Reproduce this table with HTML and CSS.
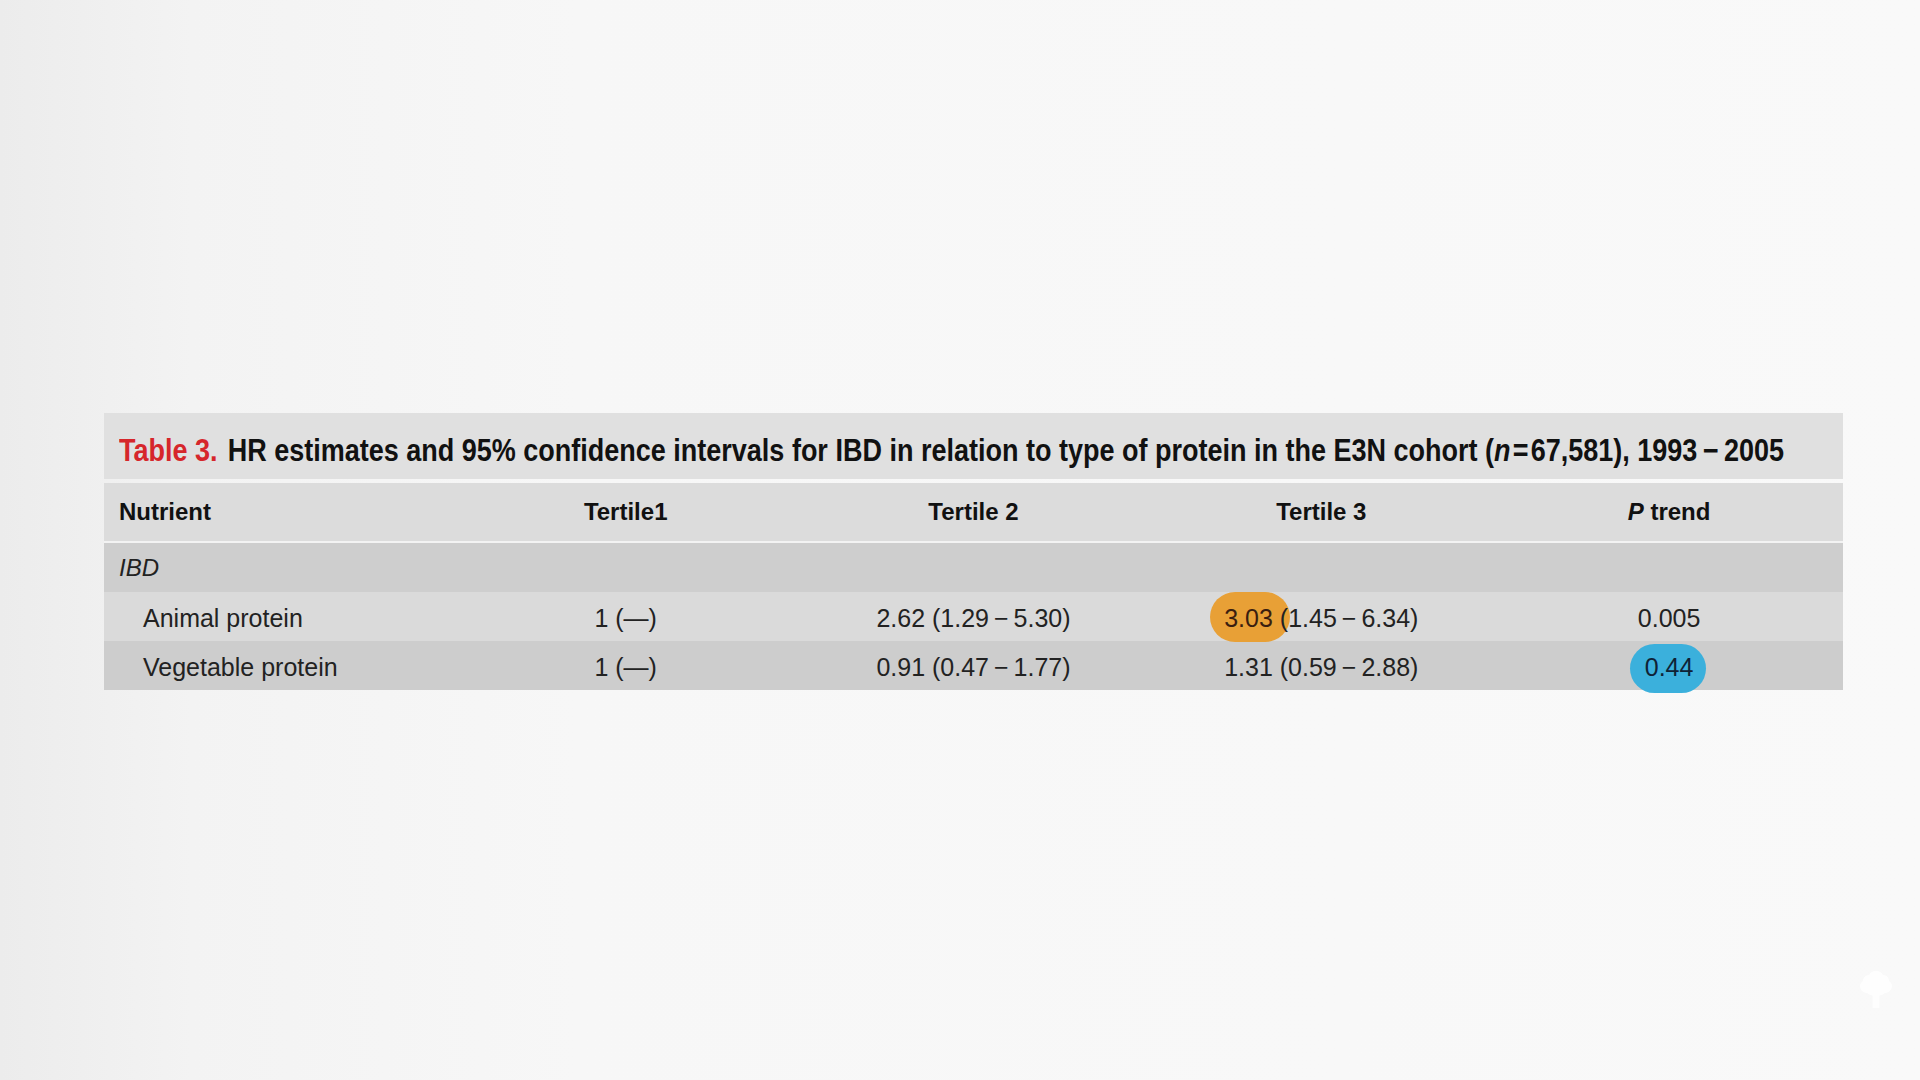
FILE: index.html
```html
<!DOCTYPE html>
<html lang="en">
<head>
<meta charset="utf-8">
<title>Table 3</title>
<link rel="stylesheet" href="styles.css">
</head>
<body>
<main class="page">
  <section class="table-card">
    <div class="caption"><span class="cap-text"><span class="cap-label">Table 3.</span> HR estimates and 95% confidence intervals for IBD in relation to type of protein in the E3N cohort (<i>n</i>&#8202;=&#8202;67,581), 1993&#8201;−&#8201;2005</span></div>
    <table class="data">
      <colgroup><col><col><col><col><col></colgroup>
      <thead>
        <tr class="head-row">
          <th class="first">Nutrient</th>
          <th>Tertile1</th>
          <th>Tertile 2</th>
          <th>Tertile 3</th>
          <th><i>P</i> trend</th>
        </tr>
      </thead>
      <tbody>
        <tr class="group-row">
          <td class="first"><i>IBD</i></td>
          <td></td><td></td><td></td><td></td>
        </tr>
        <tr class="row-a">
          <td class="first indent">Animal protein</td>
          <td>1 (—)</td>
          <td>2.62 (1.29&#8201;−&#8201;5.30)</td>
          <td class="hl"><span class="mark mark-orange">3.03</span> (1.45&#8201;−&#8201;6.34)</td>
          <td>0.005</td>
        </tr>
        <tr class="row-b">
          <td class="first indent">Vegetable protein</td>
          <td>1 (—)</td>
          <td>0.91 (0.47&#8201;−&#8201;1.77)</td>
          <td>1.31 (0.59&#8201;−&#8201;2.88)</td>
          <td class="hl"><span class="mark mark-blue">0.44</span></td>
        </tr>
      </tbody>
    </table>
  </section>
  <svg class="watermark" width="34" height="40" viewBox="0 0 34 40" aria-hidden="true">
    <path d="M17 1c4 0 6 2 7 4c3 0 6 2 6 6c2 1 3 3 3 5c0 4-3 7-7 7c-2 2-5 3-9 3c-4 0-7-1-9-3c-4 0-7-3-7-7c0-2 1-4 3-5c0-4 3-6 6-6c1-2 3-4 7-4z" fill="#ffffff"/>
    <rect x="13.5" y="24" width="7" height="14" fill="#ffffff"/>
  </svg>
</main>
</body>
</html>
```
FILE: styles.css
```css
html, body {
  margin: 0;
  padding: 0;
}
body {
  width: 1920px;
  height: 1080px;
  overflow: hidden;
  background: linear-gradient(90deg, #ececec 0%, #f3f3f3 10%, #f7f7f7 30%, #f8f8f8 70%, #f9f9f9 100%);
  font-family: "Liberation Sans", Arial, sans-serif;
  color: #1c1c1c;
}
.page {
  position: relative;
  height: 1080px;
  box-sizing: border-box;
  padding: 413px 77px 0 104px;
}
.table-card {
  display: flex;
  flex-direction: column;
  gap: 4px;
  width: 1739px;
}
.caption {
  height: 66px;
  display: flex;
  align-items: center;
  padding-left: 15px;
  background: #e0e0e0;
  font-weight: 700;
  font-size: 31px;
  color: #111;
  white-space: nowrap;
  overflow: hidden;
}
.cap-text {
  display: inline-block;
  transform: scaleX(0.871);
  transform-origin: left center;
  padding-top: 10px;
}
.caption i { font-style: italic; }
.cap-label {
  color: #d6262b;
  margin-right: 3px;
}
.data {
  width: 100%;
  table-layout: fixed;
  border-collapse: collapse;
  font-size: 25px;
}
.data col { width: 20%; }
.data th, .data td {
  padding: 0;
  text-align: center;
  white-space: nowrap;
  font-weight: 400;
}
.head-row th {
  height: 58px;
  background: #dcdcdc;
  font-weight: 700;
  font-size: 24px;
  color: #111;
  border-bottom: 2px solid #f3f3f3;
}
.data .first {
  text-align: left;
  padding-left: 15px;
}
.data .indent {
  padding-left: 39px;
}
.group-row td {
  height: 49px;
  background: #cecece;
  color: #222;
  font-size: 24px;
}
.row-a td {
  height: 49px;
  padding-top: 3px;
  box-sizing: border-box;
  background: #dadada;
  color: #222;
}
.row-b td {
  height: 49px;
  padding-top: 4px;
  box-sizing: border-box;
  background: #cdcdcd;
  color: #222;
}
.data td.hl {
  position: relative;
  z-index: 0;
}
.mark {
  position: relative;
}
.mark::before {
  content: "";
  position: absolute;
  z-index: -1;
  border-radius: 25px;
}
.mark-orange { color: #3a1e10; }
.mark-orange::before {
  left: -14px;
  right: -17px;
  top: -12px;
  bottom: -10px;
  background: #e8a036;
}
.mark-blue { color: #0f2236; }
.mark-blue::before {
  left: -15px;
  right: -13px;
  top: -9px;
  bottom: -12px;
  background: #3bb0dc;
}
.watermark {
  position: absolute;
  left: 1859px;
  top: 970px;
  opacity: 0.9;
}
```
